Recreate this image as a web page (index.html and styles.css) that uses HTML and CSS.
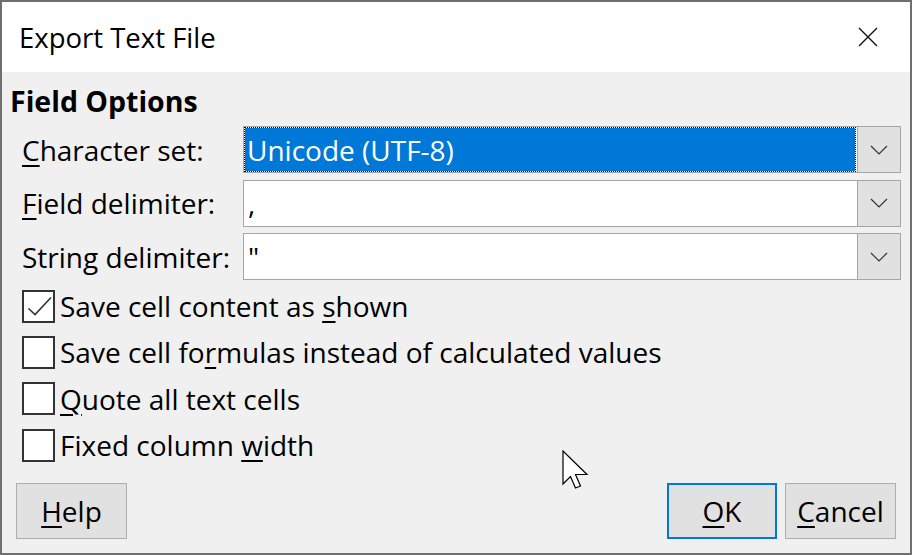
FILE: index.html
```html
<!DOCTYPE html>
<html>
<head>
<meta charset="utf-8">
<link rel="stylesheet" href="styles.css">
</head>
<body>
<div class="window">
  <div class="titlebar">
    <span class="title">Export Text File</span>
    <svg class="close" width="20" height="20" viewBox="0 0 20 20"><path d="M1 1 L19 19 M19 1 L1 19" stroke="#111" stroke-width="1.4" fill="none"/></svg>
  </div>
  <div class="content">
    <div class="heading">Field Options</div>
    <div class="fields">
      <label class="lbl"><u>C</u>haracter set:</label>
      <div class="combo selected"><div class="value"><span>Unicode (UTF-8)</span></div><div class="drop"><svg width="18" height="10" viewBox="0 0 18 10"><path d="M1 1 L9 9 L17 1" stroke="#333" stroke-width="1.2" fill="none"/></svg></div></div>
      <label class="lbl"><u>F</u>ield delimiter:</label>
      <div class="combo"><div class="value"><span>,</span></div><div class="drop"><svg width="18" height="10" viewBox="0 0 18 10"><path d="M1 1 L9 9 L17 1" stroke="#333" stroke-width="1.2" fill="none"/></svg></div></div>
      <label class="lbl">Strin<u>g</u> delimiter:</label>
      <div class="combo"><div class="value"><span>"</span></div><div class="drop"><svg width="18" height="10" viewBox="0 0 18 10"><path d="M1 1 L9 9 L17 1" stroke="#333" stroke-width="1.2" fill="none"/></svg></div></div>
    </div>
    <div class="checks">
      <div class="check"><span class="box"><svg width="28" height="28" viewBox="0 0 28 28"><path d="M3.5 16.5 L10 22.5 L26 5.5" stroke="#333" stroke-width="1.6" fill="none"/></svg></span><span>Save cell content as <u>s</u>hown</span></div>
      <div class="check"><span class="box"></span><span>Save cell fo<u>r</u>mulas instead of calculated values</span></div>
      <div class="check"><span class="box"></span><span><u>Q</u>uote all text cells</span></div>
      <div class="check"><span class="box"></span><span>Fixed column <u>w</u>idth</span></div>
    </div>
    <div class="buttons">
      <button class="btn"><u>H</u>elp</button>
      <div class="spacer"></div>
      <button class="btn default"><u>O</u>K</button>
      <button class="btn"><u>C</u>ancel</button>
    </div>
  </div>
  <svg class="cursor" width="28" height="40" viewBox="0 0 28 40"><path d="M1 1 L1 34 L8.5 26.5 L13.5 38 L18.5 36 L13.5 24.5 L25 24.5 Z" fill="#fff" stroke="#000" stroke-width="1.2" stroke-linejoin="miter"/></svg>
</div>
</body>
</html>
```

FILE: styles.css
```css
* { box-sizing: border-box; }
html, body { margin: 0; padding: 0; background: #6f6f6f; }
body { width: 912px; height: 555px; overflow: hidden; }
.window {
  position: relative;
  width: 912px;
  height: 555px;
  border: 2px solid #6f6f6f;
  display: flex;
  flex-direction: column;
  font-family: "Open Sans", "Noto Sans", sans-serif;
  font-size: 28px;
  color: #000;
  background: #f0f0f0;
}
u { text-decoration-thickness: 2px; text-underline-offset: 4px; }
.titlebar {
  height: 70px;
  background: #fff;
  display: flex;
  align-items: center;
  justify-content: space-between;
  padding: 0 32px 0 17px;
}
.title { font-size: 27.5px; }
.close { display: block; }
.content {
  flex: 1;
  display: flex;
  flex-direction: column;
  padding: 0 9px 14px 8px;
}
.heading {
  height: 54px;
  font-weight: bold;
  font-size: 28.5px;
  display: flex;
  align-items: center;
  padding-top: 4px;
}
.fields {
  margin-left: 12px;
  display: grid;
  grid-template-columns: 221px 1fr;
  grid-auto-rows: 47px;
  row-gap: 6.5px;
  align-items: center;
}
.lbl { line-height: 1; }
.combo {
  height: 47px;
  display: flex;
  border: 1px solid #a6a6a6;
  background: #fff;
}
.combo .value {
  flex: 1;
  display: flex;
  align-items: center;
  padding-left: 4px;
}
.combo.selected .value {
  margin: 1px 2px 1px 1px;
  background: #0078d7;
  color: #fff;
  outline: 1px dotted #000;
  padding-left: 2px;
}
.drop {
  width: 43px;
  border-left: 1px solid #a6a6a6;
  background: #e1e1e1;
  display: flex;
  align-items: center;
  justify-content: center;
}
.drop svg { display: block; }
.checks {
  margin-top: 10px;
  margin-left: 12px;
  display: flex;
  flex-direction: column;
  gap: 14.4px;
}
.check {
  height: 32px;
  display: flex;
  align-items: center;
  gap: 5px;
}
.box {
  width: 33px;
  height: 33px;
  border: 2px solid #333;
  background: #fff;
  display: flex;
  align-items: center;
  justify-content: center;
  flex: none;
}
.box svg { display: block; }
.buttons {
  margin-top: auto;
  display: flex;
  gap: 8px;
  padding: 0 5px 0 6px;
}
.spacer { flex: 1; }
.btn {
  height: 56px;
  width: 111px;
  font: inherit;
  color: #000;
  background: #e1e1e1;
  border: 1px solid #adadad;
  padding: 0;
  margin: 0;
}
.btn.default { width: 110px; border: 2px solid #0078d7; }
.cursor { position: absolute; left: 560px; top: 448px; }
```
